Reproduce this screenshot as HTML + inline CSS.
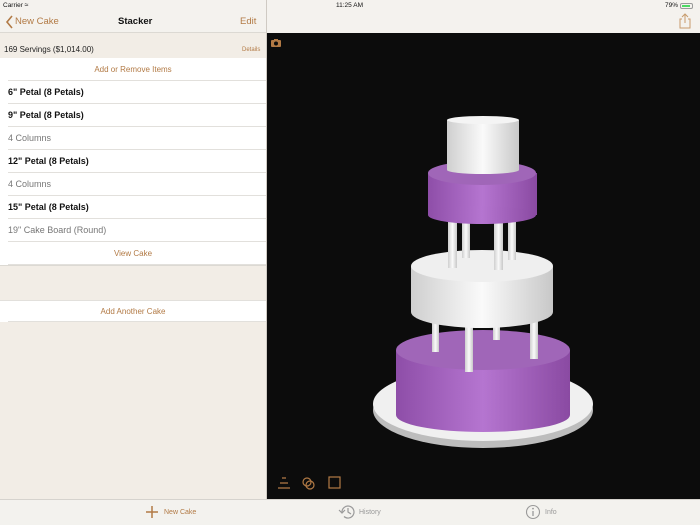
<!DOCTYPE html>
<html><head><meta charset="utf-8"><style>
*{margin:0;padding:0;box-sizing:border-box}
body{width:700px;height:525px;overflow:hidden;font-family:"Liberation Sans",sans-serif;background:#f2ede6;position:relative}
.a{position:absolute}
.row{position:absolute;left:0;width:266px;height:23px;background:#fff;font-size:9px;line-height:23px;padding-left:8px}
.row:after{content:"";position:absolute;left:8px;right:0;bottom:0;height:1px;background:#e2e0dc}
.b{font-weight:bold;color:#111}
.g{color:#777}
.c{text-align:center;padding:0;color:#b27a45;font-size:8px}
.or{color:#b27a45}
</style></head><body>
<div class="a" style="left:0;top:0;width:266px;height:33px;background:#f4f2ee;border-bottom:1px solid #dcd9d3"></div>
<div class="a" style="left:267px;top:0;width:433px;height:33px;background:#f4f2ee"></div>
<div class="a" style="left:266px;top:0;width:1px;height:499px;background:#cfcac3"></div>
<div class="a" style="left:3px;top:2px;font-size:6.5px;color:#111">Carrier <span style="font-size:7px">&#8776;</span></div>
<div class="a" style="left:336px;top:2px;font-size:6.5px;color:#111">11:25 AM</div>
<div class="a" style="left:665px;top:2px;font-size:6.5px;color:#111">79%</div>
<div class="a" style="left:680px;top:3px;width:13px;height:6px;border:1px solid #999;border-radius:2px;padding:1px"><div style="width:8px;height:2px;background:#4cd964"></div></div>
<svg class="a" style="left:5px;top:15px" width="10" height="14"><path d="M7 1L2 7L7 13" fill="none" stroke="#b27a45" stroke-width="1.6"/></svg>
<div class="a or" style="left:15px;top:16px;font-size:9.5px">New Cake</div>
<div class="a" style="left:118px;top:16px;font-size:9.5px;font-weight:bold;color:#111">Stacker</div>
<div class="a or" style="left:240px;top:16px;font-size:9.5px">Edit</div>
<svg class="a" style="left:678px;top:13px" width="14" height="16"><path d="M4 6H2v9h10V6H10M7 10V1M4 4l3-3 3 3" fill="none" stroke="#c79b6c" stroke-width="1"/></svg>
<div class="a" style="left:4px;top:45px;font-size:8px;color:#222">169 Servings ($1,014.00)</div>
<div class="a or" style="left:242px;top:47px;font-size:6px">Details</div>
<div class="row c" style="top:58px">Add or Remove Items</div>
<div class="row b" style="top:81px">6" Petal (8 Petals)</div>
<div class="row b" style="top:104px">9" Petal (8 Petals)</div>
<div class="row g" style="top:127px">4 Columns</div>
<div class="row b" style="top:150px">12" Petal (8 Petals)</div>
<div class="row g" style="top:173px">4 Columns</div>
<div class="row b" style="top:196px">15" Petal (8 Petals)</div>
<div class="row g" style="top:219px">19" Cake Board (Round)</div>
<div class="row c" style="top:242px;height:23px">View Cake</div>
<div class="a" style="left:0;top:265px;width:266px;height:1px;background:#dcd9d3"></div>
<div class="row c" style="top:300px;height:22px;line-height:22px;border-top:1px solid #e2e0dc">Add Another Cake</div>
<div class="a" style="left:267px;top:33px;width:433px;height:466px;background:#0c0c0c"></div>
<svg class="a" style="left:270px;top:38px" width="12" height="10"><rect x="1" y="2" width="10" height="7" rx="1" fill="#b27a45"/><rect x="4" y="1" width="4" height="2" fill="#b27a45"/><circle cx="6" cy="5.5" r="2" fill="#0c0c0c"/></svg>
<svg class="a" style="left:267px;top:33px" width="433" height="466">
<defs>
<linearGradient id="p" x1="0" x2="1"><stop offset="0" stop-color="#8e4ea8"/><stop offset=".5" stop-color="#b575d0"/><stop offset="1" stop-color="#8a4aa2"/></linearGradient>
<linearGradient id="w" x1="0" x2="1"><stop offset="0" stop-color="#cfcfcf"/><stop offset=".5" stop-color="#fafafa"/><stop offset="1" stop-color="#c8c8c8"/></linearGradient>
</defs>
<g transform="translate(-267,-33)">
<ellipse cx="483" cy="410" rx="110" ry="38" fill="#bdbdbd"/>
<ellipse cx="483" cy="404" rx="110" ry="37" fill="#f0f0f0"/>
<rect x="396" y="350" width="174" height="65" fill="url(#p)"/>
<ellipse cx="483" cy="415" rx="87" ry="17" fill="url(#p)"/>
<ellipse cx="483" cy="350" rx="87" ry="20" fill="#a066b8"/>
<rect x="432" y="315" width="7" height="37" fill="url(#w)"/>
<rect x="465" y="315" width="8" height="57" fill="url(#w)"/>
<rect x="493" y="315" width="7" height="25" fill="url(#w)"/>
<rect x="530" y="315" width="8" height="44" fill="url(#w)"/>
<rect x="411" y="266" width="142" height="46" fill="url(#w)"/>
<ellipse cx="482" cy="312" rx="71" ry="16" fill="url(#w)"/>
<ellipse cx="482" cy="266" rx="71" ry="16" fill="#efefef"/>
<rect x="448" y="220" width="9" height="48" fill="url(#w)"/>
<rect x="462" y="220" width="8" height="38" fill="url(#w)"/>
<rect x="494" y="220" width="9" height="50" fill="url(#w)"/>
<rect x="508" y="220" width="8" height="40" fill="url(#w)"/>
<rect x="428" y="173" width="109" height="42" fill="url(#p)"/>
<ellipse cx="482" cy="215" rx="54" ry="9" fill="url(#p)"/>
<ellipse cx="482" cy="173" rx="54" ry="12" fill="#a066b8"/>
<rect x="447" y="120" width="72" height="50" fill="url(#w)"/>
<ellipse cx="483" cy="170" rx="36" ry="4" fill="url(#w)"/>
<ellipse cx="483" cy="120" rx="36" ry="4" fill="#f4f4f4"/>
</g>
</svg>
<svg class="a" style="left:275px;top:475px" width="80" height="16"><path d="M7 3h4M5 8h8M3 13h12" stroke="#b27a45" stroke-width="1.2"/><circle cx="32" cy="7" r="4" fill="none" stroke="#b27a45" stroke-width="1.2"/><circle cx="35" cy="10" r="4" fill="none" stroke="#b27a45" stroke-width="1.2"/><rect x="54" y="2" width="11" height="11" fill="none" stroke="#b27a45" stroke-width="1.2"/></svg>
<div class="a" style="left:0;top:499px;width:700px;height:26px;background:#f3f2ee;border-top:1px solid #d6d3ce"></div>
<svg class="a" style="left:145px;top:505px" width="14" height="14"><path d="M7 1v12M1 7h12" stroke="#b27a45" stroke-width="1.5"/></svg>
<div class="a or" style="left:164px;top:509px;font-size:7px">New Cake</div>
<svg class="a" style="left:338px;top:504px" width="18" height="16"><path d="M4 8a6 6 0 1 1 2 4.5" fill="none" stroke="#999" stroke-width="1.2"/><path d="M1 6l3 3 3-3" fill="none" stroke="#999" stroke-width="1.2"/><path d="M10 4v4l3 2" fill="none" stroke="#999" stroke-width="1.2"/></svg>
<div class="a" style="left:359px;top:509px;font-size:7px;color:#999">History</div>
<svg class="a" style="left:525px;top:504px" width="16" height="16"><circle cx="8" cy="8" r="6.5" fill="none" stroke="#999" stroke-width="1.1"/><path d="M8 7v5" stroke="#999" stroke-width="1.3"/><circle cx="8" cy="4.6" r=".9" fill="#999"/></svg>
<div class="a" style="left:545px;top:509px;font-size:7px;color:#999">Info</div>
</body></html>
